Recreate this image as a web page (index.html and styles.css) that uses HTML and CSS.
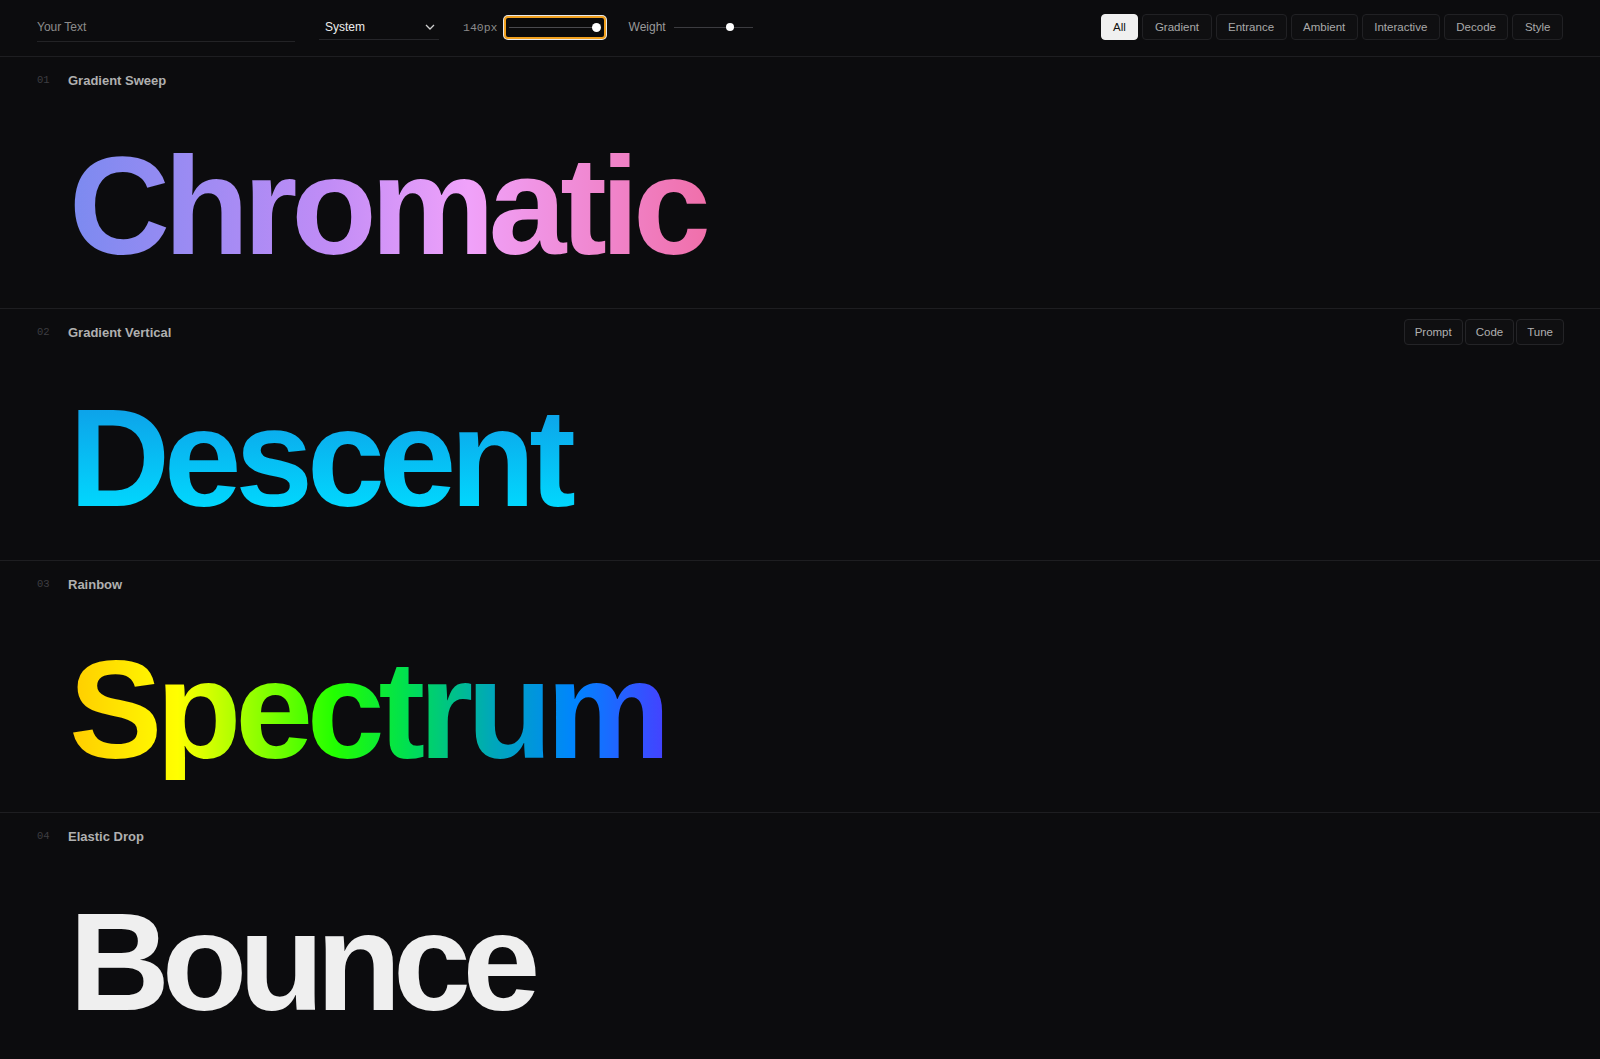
FILE: index.html
```html
<!DOCTYPE html>
<html lang="en">
<head>
    <meta charset="UTF-8">
    <meta name="viewport" content="width=device-width, initial-scale=1.0">
    <title>Type Effects</title>
    <link rel="stylesheet" href="styles.css">
</head>
<body>
    <!-- 상단 컨트롤 바 -->
    <div class="topbar">
        <input class="text-input" type="text" placeholder="Your Text">
        <div class="select">
            <span>System</span>
            <svg width="10" height="6" viewBox="0 0 10 6"><path d="M1 1l4 4 4-4" fill="none" stroke="#cfcfcf" stroke-width="1.3"/></svg>
        </div>
        <span class="size-label">140px</span>
        <div class="size-slider">
            <div class="track"></div>
            <div class="thumb"></div>
        </div>
        <span class="weight-label">Weight</span>
        <div class="weight-slider">
            <div class="track"></div>
            <div class="thumb"></div>
        </div>
        <div class="filters">
            <span class="chip active">All</span>
            <span class="chip">Gradient</span>
            <span class="chip">Entrance</span>
            <span class="chip">Ambient</span>
            <span class="chip">Interactive</span>
            <span class="chip">Decode</span>
            <span class="chip">Style</span>
        </div>
    </div>

    <!-- 효과 목록 -->
    <div class="demo">
        <div class="demo-head">
            <span class="num">01</span>
            <span class="name">Gradient Sweep</span>
        </div>
        <div class="stage"><span class="word sweep">Chromatic</span></div>
    </div>
    <div class="demo">
        <div class="demo-head">
            <span class="num">02</span>
            <span class="name">Gradient Vertical</span>
            <div class="actions">
                <span class="act">Prompt</span>
                <span class="act">Code</span>
                <span class="act">Tune</span>
            </div>
        </div>
        <div class="stage"><span class="word vertical">Descent</span></div>
    </div>
    <div class="demo">
        <div class="demo-head">
            <span class="num">03</span>
            <span class="name">Rainbow</span>
        </div>
        <div class="stage"><span class="word rainbow">Spectrum</span></div>
    </div>
    <div class="demo">
        <div class="demo-head">
            <span class="num">04</span>
            <span class="name">Elastic Drop</span>
        </div>
        <div class="stage"><span class="word plain">Bounce</span></div>
    </div>
</body>
</html>
```

FILE: styles.css
```css
body{
    margin: 0;
    background-color: #0c0c0e;
    font-family: "Liberation Sans", Arial, sans-serif;
    color: #dddddd;
}
.topbar{
    display: flex;
    align-items: center;
    height: 57px;
    box-sizing: border-box;
    padding: 0 37px 2px;
    border-bottom: 1px solid #1e1e21;
}
.text-input{
    width: 258px;
    height: 28px;
    padding: 0;
    background: transparent;
    border: none;
    border-bottom: 1px solid #232326;
    color: #dddddd;
    font-family: "Liberation Sans", Arial, sans-serif;
    font-size: 12px;
    outline: none;
}
.text-input::placeholder{
    color: #8c8c8c;
}
.select{
    display: flex;
    align-items: center;
    justify-content: space-between;
    width: 120px;
    height: 25px;
    box-sizing: border-box;
    margin-left: 24px;
    padding: 0 4px 0 6px;
    border-bottom: 1px solid #26262a;
    color: #ececec;
    font-size: 12px;
}
.size-label{
    margin-left: 24px;
    font-family: "Liberation Mono", monospace;
    font-size: 11.5px;
    color: #8a8a8a;
}
.size-slider{
    position: relative;
    width: 102px;
    height: 23px;
    box-sizing: border-box;
    margin-left: 6px;
    border: 2px solid #f0a01e;
    border-radius: 4px;
    box-shadow: 0 0 0 1px #e8e8e8;
    background-color: #0a0a0b;
}
.size-slider .track{
    position: absolute;
    left: 3px;
    right: 10px;
    top: 9px;
    height: 1px;
    background-color: #4a4a4e;
}
.size-slider .thumb{
    position: absolute;
    right: 3px;
    top: 5px;
    width: 9px;
    height: 9px;
    border-radius: 50%;
    background-color: #ffffff;
}
.weight-label{
    margin-left: 23px;
    font-size: 12px;
    color: #9a9a9a;
}
.weight-slider{
    position: relative;
    width: 79px;
    height: 10px;
    margin-left: 8px;
}
.weight-slider .track{
    position: absolute;
    left: 0;
    right: 0;
    top: 5px;
    height: 1px;
    background-color: #3c3c40;
}
.weight-slider .thumb{
    position: absolute;
    left: 52px;
    top: 1px;
    width: 8px;
    height: 8px;
    border-radius: 50%;
    background-color: #ffffff;
}
.filters{
    display: flex;
    gap: 4px;
    margin-left: auto;
}
.chip{
    height: 26px;
    box-sizing: border-box;
    padding: 0 11.5px;
    border: 1px solid #212124;
    border-radius: 4px;
    background-color: #0f0f11;
    color: #a9a9a9;
    font-size: 11.5px;
    line-height: 24px;
}
.chip.active{
    background-color: #f0f0f0;
    border-color: #f0f0f0;
    color: #111111;
}
.demo{
    height: 252px;
    box-sizing: border-box;
    padding: 10px 36px 0 37px;
    border-bottom: 1px solid #1e1e21;
    overflow: hidden;
}
.demo-head{
    display: flex;
    align-items: center;
    height: 26px;
}
.num{
    width: 31px;
    font-family: "Liberation Mono", monospace;
    font-size: 10.5px;
    color: #3e3e42;
}
.name{
    font-size: 13px;
    font-weight: bold;
    color: #b0b0b0;
}
.actions{
    display: flex;
    gap: 2px;
    margin-left: auto;
}
.act{
    height: 26px;
    box-sizing: border-box;
    padding: 0 10px;
    border: 1px solid #242427;
    border-radius: 4px;
    background-color: #0f0f11;
    color: #b0b0b0;
    font-size: 11.5px;
    line-height: 24px;
}
.stage{
    margin-top: 43px;
    padding-left: 32px;
}
.word{
    display: inline-block;
    font-size: 140px;
    font-weight: bold;
    line-height: 140px;
    letter-spacing: -0.045em;
    padding-right: 8px;
}
.sweep{
    background: linear-gradient(90deg, #7b8af0, #c08cf6 40%, #f0a2fa 62%, #f06ea8);
    -webkit-background-clip: text;
    background-clip: text;
    color: transparent;
}
.vertical{
    background: linear-gradient(180deg, #0e9fe8 10%, #00dbff 90%);
    -webkit-background-clip: text;
    background-clip: text;
    color: transparent;
}
.rainbow{
    background: linear-gradient(90deg, #ffcc00, #ffff00 18%, #22ff00 44%, #00e050 56%, #00a8b8 70%, #0084ff 84%, #4a3cff);
    -webkit-background-clip: text;
    background-clip: text;
    color: transparent;
}
.plain{
    color: #efefef;
    letter-spacing: -0.06em;
}
```
